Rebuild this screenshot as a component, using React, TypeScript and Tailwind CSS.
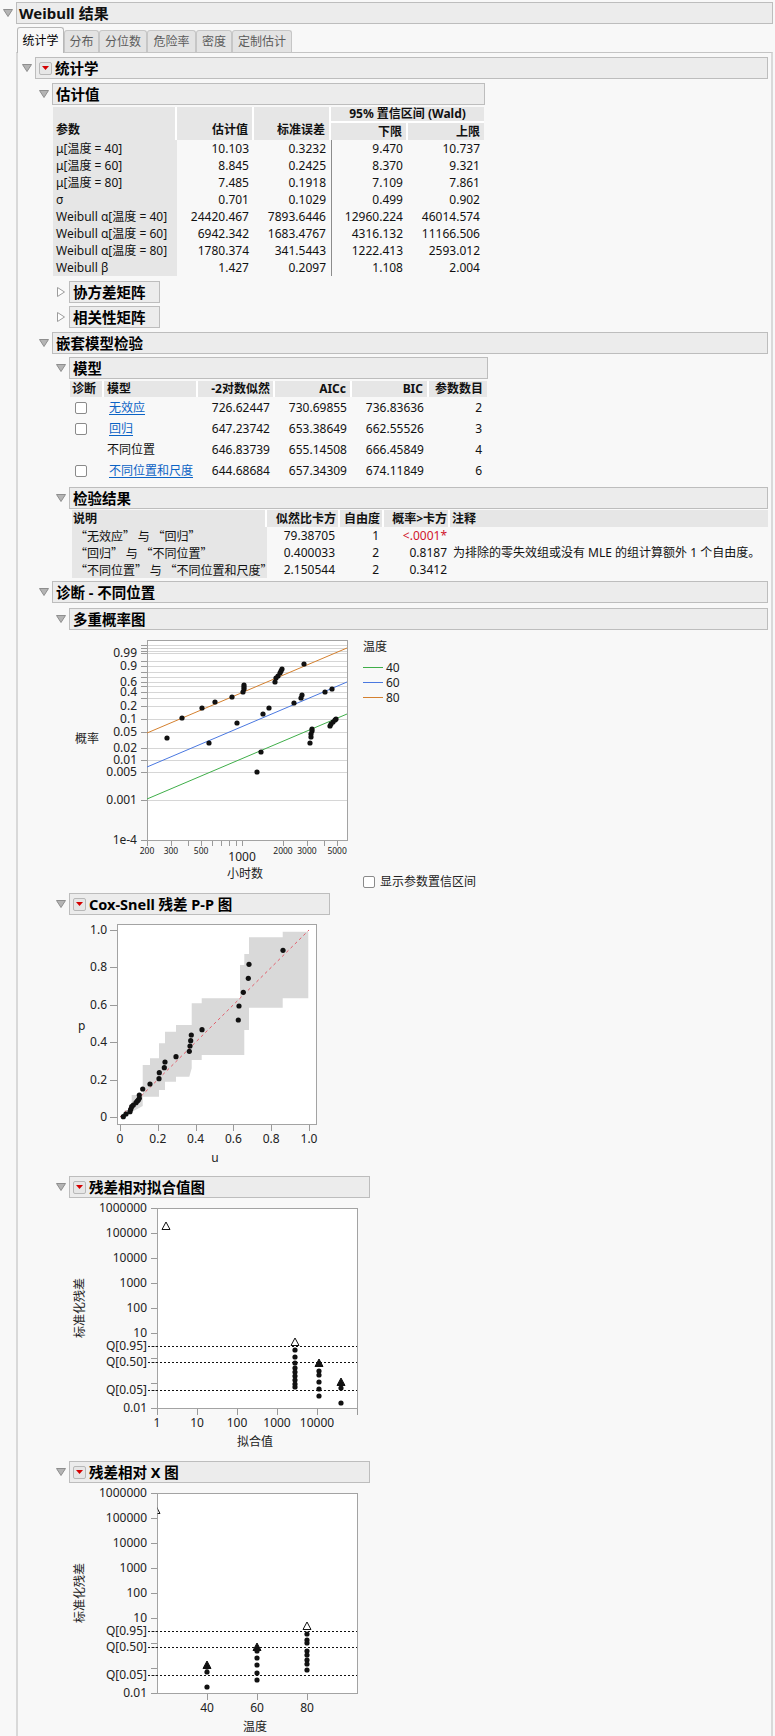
import React from "react";

// Weibull fit report: outline nodes, estimate tables and diagnostic plots

function Tri({ open = true }: { open?: boolean }) {
  return open ? (
    <svg width="10" height="8" viewBox="0 0 10 8">
      <path d="M0.5 0.5 H9.5 L5 7.5 Z" fill="#b4b4b4" stroke="#8e8e8e" />
    </svg>
  ) : (
    <svg width="8" height="10" viewBox="0 0 8 10">
      <path d="M0.5 0.5 L7.5 5 L0.5 9.5 Z" fill="#fff" stroke="#9c9c9c" />
    </svg>
  );
}

function RedMenu() {
  return (
    <span className="flex h-[13px] w-[13px] shrink-0 items-center justify-center rounded-[2px] border border-[#b8b8b8] bg-[#e6e6e6]">
      <svg width="7" height="4" viewBox="0 0 7 4">
        <path d="M0 0 H7 L3.5 4 Z" fill="#d40000" />
      </svg>
    </span>
  );
}

function Header({
  title,
  open = true,
  menu = false,
  box,
  className = "",
}: {
  title: string;
  open?: boolean;
  menu?: boolean;
  box: string;
  className?: string;
}) {
  return (
    <div className={`flex h-[22px] items-center ${className}`}>
      <div className="flex w-[17px] shrink-0 justify-center">
        <Tri open={open} />
      </div>
      <div
        className={`flex h-[22px] items-center gap-[3px] border border-[#bdbdbd] bg-[#ececec] pl-[3px] text-[14.5px] font-bold leading-none text-black ${box}`}
      >
        {menu && <RedMenu />}
        <span>{title}</span>
      </div>
    </div>
  );
}

function Checkbox() {
  return <span className="block h-[12px] w-[12px] rounded-[2px] border border-[#8a8a8a] bg-white" />;
}

const estimates = [
  ["μ[温度 = 40]", "10.103", "0.3232", "9.470", "10.737"],
  ["μ[温度 = 60]", "8.845", "0.2425", "8.370", "9.321"],
  ["μ[温度 = 80]", "7.485", "0.1918", "7.109", "7.861"],
  ["σ", "0.701", "0.1029", "0.499", "0.902"],
  ["Weibull α[温度 = 40]", "24420.467", "7893.6446", "12960.224", "46014.574"],
  ["Weibull α[温度 = 60]", "6942.342", "1683.4767", "4316.132", "11166.506"],
  ["Weibull α[温度 = 80]", "1780.374", "341.5443", "1222.413", "2593.012"],
  ["Weibull β", "1.427", "0.2097", "1.108", "2.004"],
];

function EstTable() {
  const hd = "flex bg-[#e6e6e6] font-bold";
  return (
    <div className="ml-[1px] mt-[2px] w-[431px] text-[12px] leading-none text-[#111]">
      <div className="grid h-[33px] grid-cols-[124px_77px_77px_77px_76px] grid-rows-[16px_17px]">
        <div className={`${hd} row-span-2 items-end border-r-2 border-white pb-[4px] pl-[3px]`}>参数</div>
        <div className={`${hd} row-span-2 items-end justify-end border-r-2 border-white pb-[4px] pr-[4px]`}>估计值</div>
        <div className={`${hd} row-span-2 items-end justify-end border-r-2 border-white pb-[4px] pr-[4px]`}>标准误差</div>
        <div className={`${hd} col-span-2 items-center justify-center border-b-2 border-white`}>95% 置信区间 (Wald)</div>
        <div className={`${hd} items-center justify-end border-r-2 border-white pr-[4px]`}>下限</div>
        <div className={`${hd} items-center justify-end pr-[4px]`}>上限</div>
      </div>
      {estimates.map((r) => (
        <div key={r[0]} className="grid h-[17px] grid-cols-[124px_77px_77px_77px_76px]">
          <div className="flex items-center bg-[#e6e6e6] pl-[3px]">{r[0]}</div>
          <div className="flex items-center justify-end pr-[5px]">{r[1]}</div>
          <div className="flex items-center justify-end pr-[5px]">{r[2]}</div>
          <div className="flex items-center justify-end border-l border-[#8c8c8c] pr-[5px]">{r[3]}</div>
          <div className="flex items-center justify-end pr-[4px]">{r[4]}</div>
        </div>
      ))}
    </div>
  );
}

const models = [
  { box: true, link: true, name: "无效应", v: ["726.62447", "730.69855", "736.83636", "2"] },
  { box: true, link: true, name: "回归", v: ["647.23742", "653.38649", "662.55526", "3"] },
  { box: false, link: false, name: "不同位置", v: ["646.83739", "655.14508", "666.45849", "4"] },
  { box: true, link: true, name: "不同位置和尺度", v: ["644.68684", "657.34309", "674.11849", "6"] },
];

function ModelTable() {
  const hd = "flex items-center bg-[#e6e6e6] font-bold";
  return (
    <div className="ml-[1px] mt-[2px] w-[417px] text-[12px] leading-none text-[#111]">
      <div className="grid h-[16px] grid-cols-[34px_94px_77px_77px_77px_58px]">
        <div className={`${hd} border-r-2 border-white pl-[2px]`}>诊断</div>
        <div className={`${hd} border-r-2 border-white pl-[3px]`}>模型</div>
        <div className={`${hd} justify-end border-r-2 border-white pr-[3px]`}>-2对数似然</div>
        <div className={`${hd} justify-end border-r-2 border-white pr-[4px]`}>AICc</div>
        <div className={`${hd} justify-end border-r-2 border-white pr-[4px]`}>BIC</div>
        <div className={`${hd} justify-end pr-[4px]`}>参数数目</div>
      </div>
      {models.map((m) => (
        <div key={m.name} className="grid h-[21px] grid-cols-[34px_94px_77px_77px_77px_58px]">
          <div className="flex items-center pl-[5px]">{m.box && <Checkbox />}</div>
          <div className="flex items-center pl-[5px]">
            {m.link ? (
              <span className="text-[#0b63c5] underline underline-offset-2">{m.name}</span>
            ) : (
              <span className="-ml-[2px]">{m.name}</span>
            )}
          </div>
          {m.v.map((v, i) => (
            <div key={i} className={`flex items-center justify-end ${i === 3 ? "pr-[5px]" : "pr-[5px]"}`}>
              {v}
            </div>
          ))}
        </div>
      ))}
    </div>
  );
}

const tests = [
  ["“无效应” 与 “回归”", "79.38705", "1", "<.0001*", ""],
  ["“回归” 与 “不同位置”", "0.400033", "2", "0.8187", "为排除的零失效组或没有 MLE 的组计算额外 1 个自由度。"],
  ["“不同位置” 与 “不同位置和尺度”", "2.150544", "2", "0.3412", ""],
];

function TestTable() {
  const hd = "flex items-center bg-[#e6e6e6] font-bold";
  return (
    <div className="ml-[3px] mt-[1px] text-[12px] leading-none text-[#111]">
      <div className="grid h-[17px] grid-cols-[195px_73px_44px_66px_1fr]">
        <div className={`${hd} border-r-2 border-white pl-[1px]`}>说明</div>
        <div className={`${hd} justify-end border-r-2 border-white pr-[2px]`}>似然比卡方</div>
        <div className={`${hd} justify-end border-r-2 border-white pr-[2px]`}>自由度</div>
        <div className={`${hd} justify-end border-r-2 border-white pr-[1px]`}>概率&gt;卡方</div>
        <div className={`${hd} pl-[2px]`}>注释</div>
      </div>
      {tests.map((t) => (
        <div key={t[0]} className="grid h-[17px] grid-cols-[195px_73px_44px_66px_1fr]">
          <div className="flex items-center bg-[#e6e6e6] pl-[3px] font-['Noto_Sans_CJK_SC',sans-serif]">{t[0]}</div>
          <div className="flex items-center justify-end pr-[5px]">{t[1]}</div>
          <div className="flex items-center justify-end pr-[5px]">{t[2]}</div>
          <div className={`flex items-center justify-end pr-[3px] ${t[3].startsWith("<") ? "text-[#d0142c]" : ""}`}>
            {t[3]}
          </div>
          <div className="flex items-center whitespace-nowrap pl-[3px]">{t[4]}</div>
        </div>
      ))}
    </div>
  );
}

const px = (v: number) => Math.round(v) + 0.5;

function Dot({ x, y }: { x: number; y: number }) {
  return <circle cx={x} cy={y} r={2.6} fill="#111" />;
}

function Delta({ x, y, open }: { x: number; y: number; open?: boolean }) {
  return (
    <path
      d={`M${x - 4} ${y + 3.5} L${x} ${y - 4} L${x + 4} ${y + 3.5} Z`}
      fill={open ? "#fff" : "#111"}
      stroke="#111"
      strokeWidth={1}
    />
  );
}

const orange80 = [
  [35, 78], [55, 68], [68, 62], [85, 57], [96, 52], [97, 49], [97, 47], [97, 45], [128, 42], [129, 38],
  [131, 36], [133, 33], [134, 31], [135, 29], [157, 24], [20, 98],
];
const blue60 = [[62, 103], [90, 83], [116, 74], [122, 68], [147, 63], [154, 58], [155, 55], [178, 52], [185, 49]];
const green40 = [
  [110, 132], [114, 112], [163, 103], [164, 97], [164, 94], [165, 91], [165, 89], [183, 86], [184, 84],
  [186, 82], [188, 80], [189, 79],
];

function ProbPlot() {
  const y = (p: number) => 210 - 40 * (Math.log10(-Math.log(1 - p)) + 4);
  const x = (h: number) => 78 + (Math.log10(h) - Math.log10(200)) * 136;
  const grid = [0.9995, 0.998, 0.995, 0.99, 0.95, 0.9, 0.8, 0.7, 0.6, 0.5, 0.4, 0.3, 0.2, 0.1, 0.05, 0.02, 0.01, 0.005, 0.001];
  const labels: [number, string][] = [
    [0.99, "0.99"], [0.9, "0.9"], [0.6, "0.6"], [0.4, "0.4"], [0.2, "0.2"], [0.1, "0.1"],
    [0.05, "0.05"], [0.02, "0.02"], [0.01, "0.01"], [0.005, "0.005"], [0.001, "0.001"],
  ];
  const ticks = [200, 300, 400, 500, 600, 700, 800, 900, 1000, 2000, 3000, 4000, 5000];
  const small = [200, 300, 500, 2000, 3000, 5000];
  return (
    <div className="flex">
      <svg width="290" height="260" className="block shrink-0" fill="#222">
        <rect x="78.5" y="10.5" width="200" height="200" fill="#fff" stroke="#a3a3a3" />
        {grid.map((p) => (
          <line key={p} x1="79" x2="278" y1={px(y(p))} y2={px(y(p))} stroke="#d6d6d6" />
        ))}
        {grid.map((p) => (
          <line key={"t" + p} x1="72" x2="78" y1={px(y(p))} y2={px(y(p))} stroke="#9a9a9a" />
        ))}
        <line x1="72" x2="78" y1="210.5" y2="210.5" stroke="#9a9a9a" />
        {ticks.map((h) => (
          <line key={h} x1={px(x(h))} x2={px(x(h))} y1="211" y2="216" stroke="#9a9a9a" />
        ))}
        <line x1="78" y1="169" x2="278" y2="84" stroke="#3fae49" />
        <line x1="78" y1="137" x2="278" y2="52" stroke="#4a78e0" />
        <line x1="78" y1="103" x2="278" y2="18" stroke="#d4802f" />
        {[...orange80, ...blue60, ...green40].map(([a, b], i) => (
          <Dot key={i} x={a + 78} y={b + 10} />
        ))}
        <g fontSize="12" textAnchor="end">
          {labels.map(([p, t]) => (
            <text key={t} x="68" y={y(p) + 4}>
              {t}
            </text>
          ))}
          <text x="68" y="214">1e-4</text>
        </g>
        <g fontSize="8.5" textAnchor="middle">
          {small.map((h) => (
            <text key={h} x={x(h)} y="224">
              {h}
            </text>
          ))}
        </g>
        <text x={x(1000)} y="231" fontSize="12" textAnchor="middle">
          1000
        </text>
        <text x="176" y="248" fontSize="12" textAnchor="middle">
          小时数
        </text>
        <text x="6" y="113" fontSize="12">
          概率
        </text>
      </svg>
      <div className="ml-[4px] flex h-[260px] flex-col pt-[9px] text-[12px] leading-none text-[#222]">
        <div className="flex h-[16px] items-center">温度</div>
        <div className="mt-[5px] flex h-[15px] items-center">
          <span className="h-px w-[20px] bg-[#3fae49]" />
          <span className="ml-[3px]">40</span>
        </div>
        <div className="flex h-[15px] items-center">
          <span className="h-px w-[20px] bg-[#4a78e0]" />
          <span className="ml-[3px]">60</span>
        </div>
        <div className="flex h-[15px] items-center">
          <span className="h-px w-[20px] bg-[#d4802f]" />
          <span className="ml-[3px]">80</span>
        </div>
        <div className="mb-[2px] mt-auto flex items-center gap-[5px]">
          <Checkbox />
          <span>显示参数置信区间</span>
        </div>
      </div>
    </div>
  );
}

const band = [
  [51.7, 201.3], [56, 194], [62.7, 194], [62.7, 179], [73.7, 179], [73.7, 149], [81, 149], [81, 142.3],
  [90, 142.3], [90, 127.3], [96, 127.3], [96, 115.7], [107, 115.7], [107, 109], [122.7, 109], [122.7, 87.3],
  [132.7, 87.3], [132.7, 82.3], [171, 82.3], [171, 49], [175.3, 49], [175.3, 38], [180, 38], [180, 21.3],
  [213.7, 21.3], [213.7, 15.7], [239.3, 15.7], [239.3, 82.3], [213.7, 82.3], [213.7, 91.7], [180, 91.7],
  [180, 114], [175.3, 114], [175.3, 139], [132.7, 139], [132.7, 144], [122.7, 144], [122.7, 152.3],
  [120.3, 160.7], [107, 160.7], [107, 165.7], [96, 165.7], [96, 174], [90, 174], [90, 180.7], [73.7, 180.7],
  [73.7, 190], [62.7, 196], [56, 201.3],
];

const csDots = [
  [54.3, 200.7], [57, 198], [61, 195.7], [61.7, 193.3], [62.7, 190.7], [64.3, 189], [67, 186.7], [68.3, 185],
  [69.3, 184], [70.3, 182.3], [70.3, 179], [73.7, 173], [81, 168], [90, 162.7], [90.3, 156.7], [95.3, 151.7],
  [96, 146], [107, 140.7], [120.3, 135.3], [121, 130], [121.7, 124.7], [122.3, 119], [133, 113.7], [169.3, 104],
  [170, 90], [174.3, 76.3], [179.3, 62.3], [180, 48.3], [214, 34.3],
];

function CoxSnell() {
  const ux = (u: number) => 51 + 189 * u;
  const py = (p: number) => 201 - 187 * p;
  const steps = [0, 0.2, 0.4, 0.6, 0.8, 1];
  const lab = (v: number) => (v === 0 ? "0" : v.toFixed(1));
  return (
    <svg width="260" height="257" className="mt-[1px] block" fill="#222">
      <rect x="48.5" y="8.5" width="199" height="200" fill="#fff" stroke="#a3a3a3" />
      <polygon points={band.map((p) => p.join(",")).join(" ")} fill="#d9d9d9" />
      <line x1={ux(0)} y1={py(0)} x2={ux(1)} y2={py(1)} stroke="#e35d6a" strokeDasharray="3 3" />
      {csDots.map(([a, b], i) => (
        <Dot key={i} x={a} y={b} />
      ))}
      {steps.map((s) => (
        <g key={s}>
          <line x1="41" x2="48" y1={px(py(s))} y2={px(py(s))} stroke="#9a9a9a" />
          <line x1={px(ux(s))} x2={px(ux(s))} y1="209" y2="215" stroke="#9a9a9a" />
          <text x="38" y={py(s) + 4} fontSize="12" textAnchor="end">
            {lab(s)}
          </text>
          <text x={ux(s)} y="227" fontSize="12" textAnchor="middle">
            {lab(s)}
          </text>
        </g>
      ))}
      <text x="146" y="246" fontSize="12" textAnchor="middle">
        u
      </text>
      <text x="9" y="114" fontSize="12">
        p
      </text>
    </svg>
  );
}

function ResidPlot({
  height,
  xTicks,
  xTitle,
  children,
}: {
  height: number;
  xTicks: [number, string][];
  xTitle: string;
  children: React.ReactNode;
}) {
  const decades: [number, string][] = [
    [9, "1000000"], [34, "100000"], [59, "10000"], [84, "1000"], [109, "100"], [134, "10"],
  ];
  const qs: [number, string][] = [[147, "Q[0.95]"], [163, "Q[0.50]"], [191, "Q[0.05]"]];
  const tickYs = [9, 34, 59, 84, 109, 134, 147, 159, 163, 184, 191, 209];
  return (
    <svg width="300" height={height} className="mt-[1px] block" fill="#222">
      <defs>
        <clipPath id={`frame-${xTitle}`}>
          <rect x="88.5" y="9" width="200" height="200" />
        </clipPath>
      </defs>
      <rect x="88.5" y="9.5" width="200" height="200" fill="#fff" stroke="#a3a3a3" />
      {tickYs.map((t) => (
        <line key={t} x1="82" x2="88" y1={t + 0.5} y2={t + 0.5} stroke="#9a9a9a" />
      ))}
      {qs.map(([t]) => (
        <line key={"q" + t} x1="79" x2="288" y1={t + 0.5} y2={t + 0.5} stroke="#111" strokeDasharray="2 2" />
      ))}
      <g fontSize="12" textAnchor="end">
        {decades.map(([t, s]) => (
          <text key={s} x="78" y={t + 4}>
            {s}
          </text>
        ))}
        {qs.map(([t, s]) => (
          <text key={s} x="78" y={t + 4}>
            {s}
          </text>
        ))}
        <text x="78" y="213">0.01</text>
      </g>
      {xTicks.map(([x, s]) => (
        <g key={s}>
          <line x1={x + 0.5} x2={x + 0.5} y1="210" y2="216" stroke="#9a9a9a" />
          <text x={x} y="228" fontSize="12" textAnchor="middle">
            {s}
          </text>
        </g>
      ))}
      <text x="186" y="247" fontSize="12" textAnchor="middle">
        {xTitle}
      </text>
      <text x="15" y="109" fontSize="12" textAnchor="middle" transform="rotate(-90 15 109)">
        标准化残差
      </text>
      <g clipPath={`url(#frame-${xTitle})`}>{children}</g>
    </svg>
  );
}

function FitPlot() {
  const c1 = [151, 158, 164, 169, 173, 177, 181, 185, 188];
  const c2 = [172, 176, 183, 190, 197];
  const c3 = [189, 204];
  return (
    <ResidPlot
      height={259}
      xTitle="拟合值"
      xTicks={[
        [88, "1"], [128, "10"], [168, "100"], [208, "1000"], [248, "10000"], [288, ""],
      ]}
    >
      <Delta x={97} y={27} open />
      <Delta x={226} y={143} open />
      {c1.map((y) => (
        <Dot key={"a" + y} x={226} y={y} />
      ))}
      <Delta x={250} y={164} />
      {c2.map((y) => (
        <Dot key={"b" + y} x={250} y={y} />
      ))}
      <Delta x={272} y={183} />
      {c3.map((y) => (
        <Dot key={"c" + y} x={272} y={y} />
      ))}
    </ResidPlot>
  );
}

function XPlot() {
  const c40 = [183, 188, 203];
  const c60 = [167, 174, 181, 189, 196];
  const c80 = [150, 156, 159, 167, 171, 176, 180, 186];
  return (
    <ResidPlot height={252} xTitle="温度" xTicks={[[138, "40"], [188, "60"], [238, "80"]]}>
      <Delta x={87} y={26} open />
      <Delta x={138} y={181} />
      {c40.map((y) => (
        <Dot key={"a" + y} x={138} y={y} />
      ))}
      <Delta x={188} y={163} />
      {c60.map((y) => (
        <Dot key={"b" + y} x={188} y={y} />
      ))}
      <Delta x={238} y={142} open />
      {c80.map((y) => (
        <Dot key={"c" + y} x={238} y={y} />
      ))}
    </ResidPlot>
  );
}

const tabs: [string, string][] = [
  ["分布", "w-[35px]"],
  ["分位数", "w-[48px]"],
  ["危险率", "w-[49px]"],
  ["密度", "w-[36px]"],
  ["定制估计", "w-[60px]"],
];

export default function App() {
  return (
    <div className="h-[1736px] w-[775px] overflow-hidden bg-[#f8f8f8] font-['Noto_Sans','Noto_Sans_CJK_SC',sans-serif] text-[#111]">
      <div className="mt-[2px] flex h-[22px] items-center">
        <div className="flex w-[16px] shrink-0 justify-center">
          <Tri />
        </div>
        <div className="flex h-[22px] w-[757px] items-center border border-[#bdbdbd] bg-[#ececec] pl-[2px] text-[15px] font-bold leading-none">
          Weibull 结果
        </div>
      </div>

      <div className="ml-[17px] mt-[3px] flex h-[25px] items-end text-[12px] leading-none">
        <div className="relative z-10 -mb-px flex h-[26px] w-[47px] items-center justify-center rounded-t-[3px] border border-b-0 border-[#b8b8b8] bg-[#f8f8f8] text-black">
          统计学
        </div>
        {tabs.map(([t, w]) => (
          <div
            key={t}
            className={`flex h-[22px] items-center justify-center rounded-t-[3px] border border-b-0 border-[#c6c6c6] bg-[#e3e3e3] text-[#5c5c5c] ${w}`}
          >
            {t}
          </div>
        ))}
      </div>

      <div className="ml-[16px] flex h-[1700px] w-[757px] flex-col border-x-2 border-t border-x-[#d9d9d9] border-t-[#c4c4c4] pr-[3px]">
        <Header title="统计学" menu box="flex-1" className="mt-[4px]" />
        <div className="flex flex-col pl-[17px]">
          <Header title="估计值" box="w-[433px]" className="mt-[4px]" />
          <div className="flex flex-col pl-[17px]">
            <EstTable />
            <Header title="协方差矩阵" open={false} box="w-[91px]" className="mt-[5px]" />
            <Header title="相关性矩阵" open={false} box="w-[91px]" className="mt-[3px]" />
          </div>

          <Header title="嵌套模型检验" box="flex-1" className="mt-[4px]" />
          <div className="flex flex-col pl-[17px]">
            <Header title="模型" box="w-[419px]" className="mt-[3px]" />
            <div className="pl-[17px]">
              <ModelTable />
            </div>
            <Header title="检验结果" box="flex-1" className="mt-[6px]" />
            <div className="pl-[17px]">
              <TestTable />
            </div>
          </div>

          <Header title="诊断 - 不同位置" box="flex-1" className="mt-[3px]" />
          <div className="flex flex-col pl-[17px]">
            <Header title="多重概率图" box="flex-1" className="mt-[5px]" />
            <div className="pl-[17px]">
              <ProbPlot />
            </div>
            <Header title="Cox-Snell 残差 P-P 图" menu box="w-[261px]" className="mt-[3px]" />
            <div className="pl-[17px]">
              <CoxSnell />
            </div>
            <Header title="残差相对拟合值图" menu box="w-[301px]" className="mt-[3px]" />
            <div className="pl-[17px]">
              <FitPlot />
            </div>
            <Header title="残差相对 X 图" menu box="w-[301px]" className="mt-[3px]" />
            <div className="pl-[17px]">
              <XPlot />
            </div>
          </div>
        </div>
      </div>
    </div>
  );
}
